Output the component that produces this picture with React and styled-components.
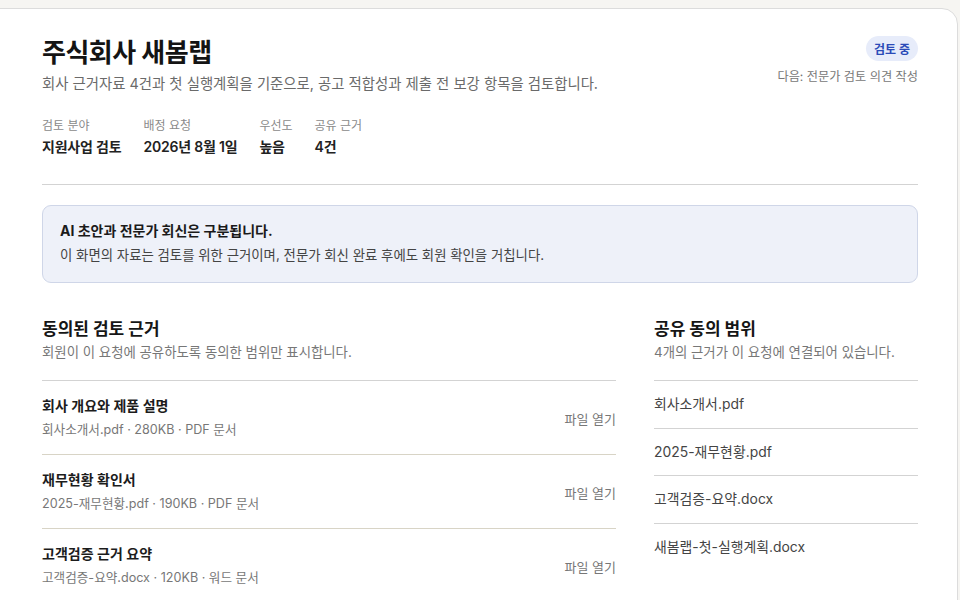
import React from 'react';
import styled, { createGlobalStyle } from 'styled-components';

const GlobalStyle = createGlobalStyle`
  html, body {
    margin: 0;
    padding: 0;
    background: #f6f5f2;
    font-family: "Inter", "Noto Sans CJK KR", sans-serif;
    color: #1d1d1f;
    overflow: hidden;
  }
`;

const Page = styled.div`
  padding-top: 8px;
  height: 592px;
  overflow: hidden;
`;

const Card = styled.main`
  margin-left: -20px;
  margin-right: 2px;
  background: #fff;
  border: 1px solid #dcdcdc;
  border-radius: 0 16px 0 0;
  padding: 26px 39px 40px 61px;
  min-height: 600px;
`;

const Header = styled.header`
  display: flex;
  justify-content: space-between;
  align-items: flex-start;
  padding-bottom: 27px;
  border-bottom: 1px solid #d3d3d3;
`;

const Title = styled.h1`
  margin: 0;
  font-size: 26px;
  line-height: 36px;
  font-weight: 700;
  letter-spacing: -0.5px;
  color: #141414;
`;

const Lead = styled.p`
  margin: 2px 0 0;
  font-size: 14.4px;
  line-height: 22px;
  color: #6a6a6a;
`;

const Meta = styled.dl`
  display: flex;
  gap: 22px;
  margin: 22px 0 0;
`;

const MetaItem = styled.div`
  display: flex;
  flex-direction: column;
  gap: 2px;
`;

const MetaLabel = styled.dt`
  font-size: 12px;
  line-height: 18px;
  color: #8a8a8a;
`;

const MetaValue = styled.dd`
  margin: 0;
  font-size: 14px;
  line-height: 20px;
  font-weight: 600;
  letter-spacing: -0.2px;
  color: #222;
`;

const Status = styled.div`
  display: flex;
  flex-direction: column;
  align-items: flex-end;
  gap: 6px;
  padding-top: 1px;
`;

const Badge = styled.span`
  display: inline-flex;
  align-items: center;
  height: 25px;
  padding: 0 8px;
  border-radius: 999px;
  background: #e7ecfa;
  color: #2b4bb8;
  font-size: 12px;
  font-weight: 700;
`;

const NextStep = styled.span`
  font-size: 12.2px;
  color: #777;
`;

const Notice = styled.section`
  margin-top: 20px;
  background: #eef1f9;
  border: 1px solid #cfd6e8;
  border-radius: 9px;
  padding: 14px 17px 16px;
`;

const NoticeTitle = styled.strong`
  display: block;
  font-size: 14px;
  line-height: 22px;
  font-weight: 700;
  color: #1a1a1a;
`;

const NoticeText = styled.p`
  margin: 2px 0 0;
  font-size: 13.4px;
  line-height: 22px;
  color: #444;
`;

const Columns = styled.div`
  display: grid;
  grid-template-columns: 574px 264px;
  gap: 38px;
  margin-top: 33px;
`;

const SectionTitle = styled.h2`
  margin: 0;
  font-size: 17px;
  line-height: 26px;
  font-weight: 700;
  color: #161616;
`;

const SectionSub = styled.p`
  margin: 0 0 17px;
  font-size: 13.4px;
  line-height: 21px;
  color: #777;
`;

const List = styled.ul`
  list-style: none;
  margin: 0;
  padding: 0;
`;

const DocRow = styled.li`
  display: flex;
  justify-content: space-between;
  align-items: center;
  height: 74px;
  box-sizing: border-box;
  border-top: 1px solid ${(p) => (p.$accent ? '#d8d4c6' : '#d3d3d3')};
  padding-top: 1px;
`;

const DocInfo = styled.div`
  display: flex;
  flex-direction: column;
  gap: 4px;
`;

const DocName = styled.span`
  font-size: 14px;
  line-height: 20px;
  font-weight: 600;
  color: #1c1c1c;
`;

const DocMeta = styled.span`
  font-size: 12.6px;
  line-height: 20px;
  color: #777;
`;

const OpenLink = styled.a`
  font-size: 13px;
  color: #777;
  text-decoration: none;
  cursor: pointer;
`;

const FileRow = styled.li`
  height: 47.7px;
  box-sizing: border-box;
  border-top: 1px solid #d3d3d3;
  padding-top: 12px;
  font-size: 13.9px;
  line-height: 22px;
  color: #444;
`;

const docs = [
  { name: '회사 개요와 제품 설명', meta: '회사소개서.pdf · 280KB · PDF 문서' },
  { name: '재무현황 확인서', meta: '2025-재무현황.pdf · 190KB · PDF 문서' },
  { name: '고객검증 근거 요약', meta: '고객검증-요약.docx · 120KB · 워드 문서' },
];

const files = ['회사소개서.pdf', '2025-재무현황.pdf', '고객검증-요약.docx', '새봄랩-첫-실행계획.docx'];

const meta = [
  { label: '검토 분야', value: '지원사업 검토' },
  { label: '배정 요청', value: '2026년 8월 1일' },
  { label: '우선도', value: '높음' },
  { label: '공유 근거', value: '4건' },
];

export default function App() {
  return (
    <Page>
      <GlobalStyle />
      <Card>
        <Header>
          <div>
            <Title>주식회사 새봄랩</Title>
            <Lead>회사 근거자료 4건과 첫 실행계획을 기준으로, 공고 적합성과 제출 전 보강 항목을 검토합니다.</Lead>
            <Meta>
              {meta.map((m) => (
                <MetaItem key={m.label}>
                  <MetaLabel>{m.label}</MetaLabel>
                  <MetaValue>{m.value}</MetaValue>
                </MetaItem>
              ))}
            </Meta>
          </div>
          <Status>
            <Badge>검토 중</Badge>
            <NextStep>다음: 전문가 검토 의견 작성</NextStep>
          </Status>
        </Header>

        <Notice>
          <NoticeTitle>AI 초안과 전문가 회신은 구분됩니다.</NoticeTitle>
          <NoticeText>이 화면의 자료는 검토를 위한 근거이며, 전문가 회신 완료 후에도 회원 확인을 거칩니다.</NoticeText>
        </Notice>

        <Columns>
          <section>
            <SectionTitle>동의된 검토 근거</SectionTitle>
            <SectionSub>회원이 이 요청에 공유하도록 동의한 범위만 표시합니다.</SectionSub>
            <List>
              {docs.map((d, i) => (
                <DocRow key={d.name} $accent={i > 0}>
                  <DocInfo>
                    <DocName>{d.name}</DocName>
                    <DocMeta>{d.meta}</DocMeta>
                  </DocInfo>
                  <OpenLink>파일 열기</OpenLink>
                </DocRow>
              ))}
            </List>
          </section>
          <section>
            <SectionTitle>공유 동의 범위</SectionTitle>
            <SectionSub>4개의 근거가 이 요청에 연결되어 있습니다.</SectionSub>
            <List>
              {files.map((f) => (
                <FileRow key={f}>{f}</FileRow>
              ))}
            </List>
          </section>
        </Columns>
      </Card>
    </Page>
  );
}
